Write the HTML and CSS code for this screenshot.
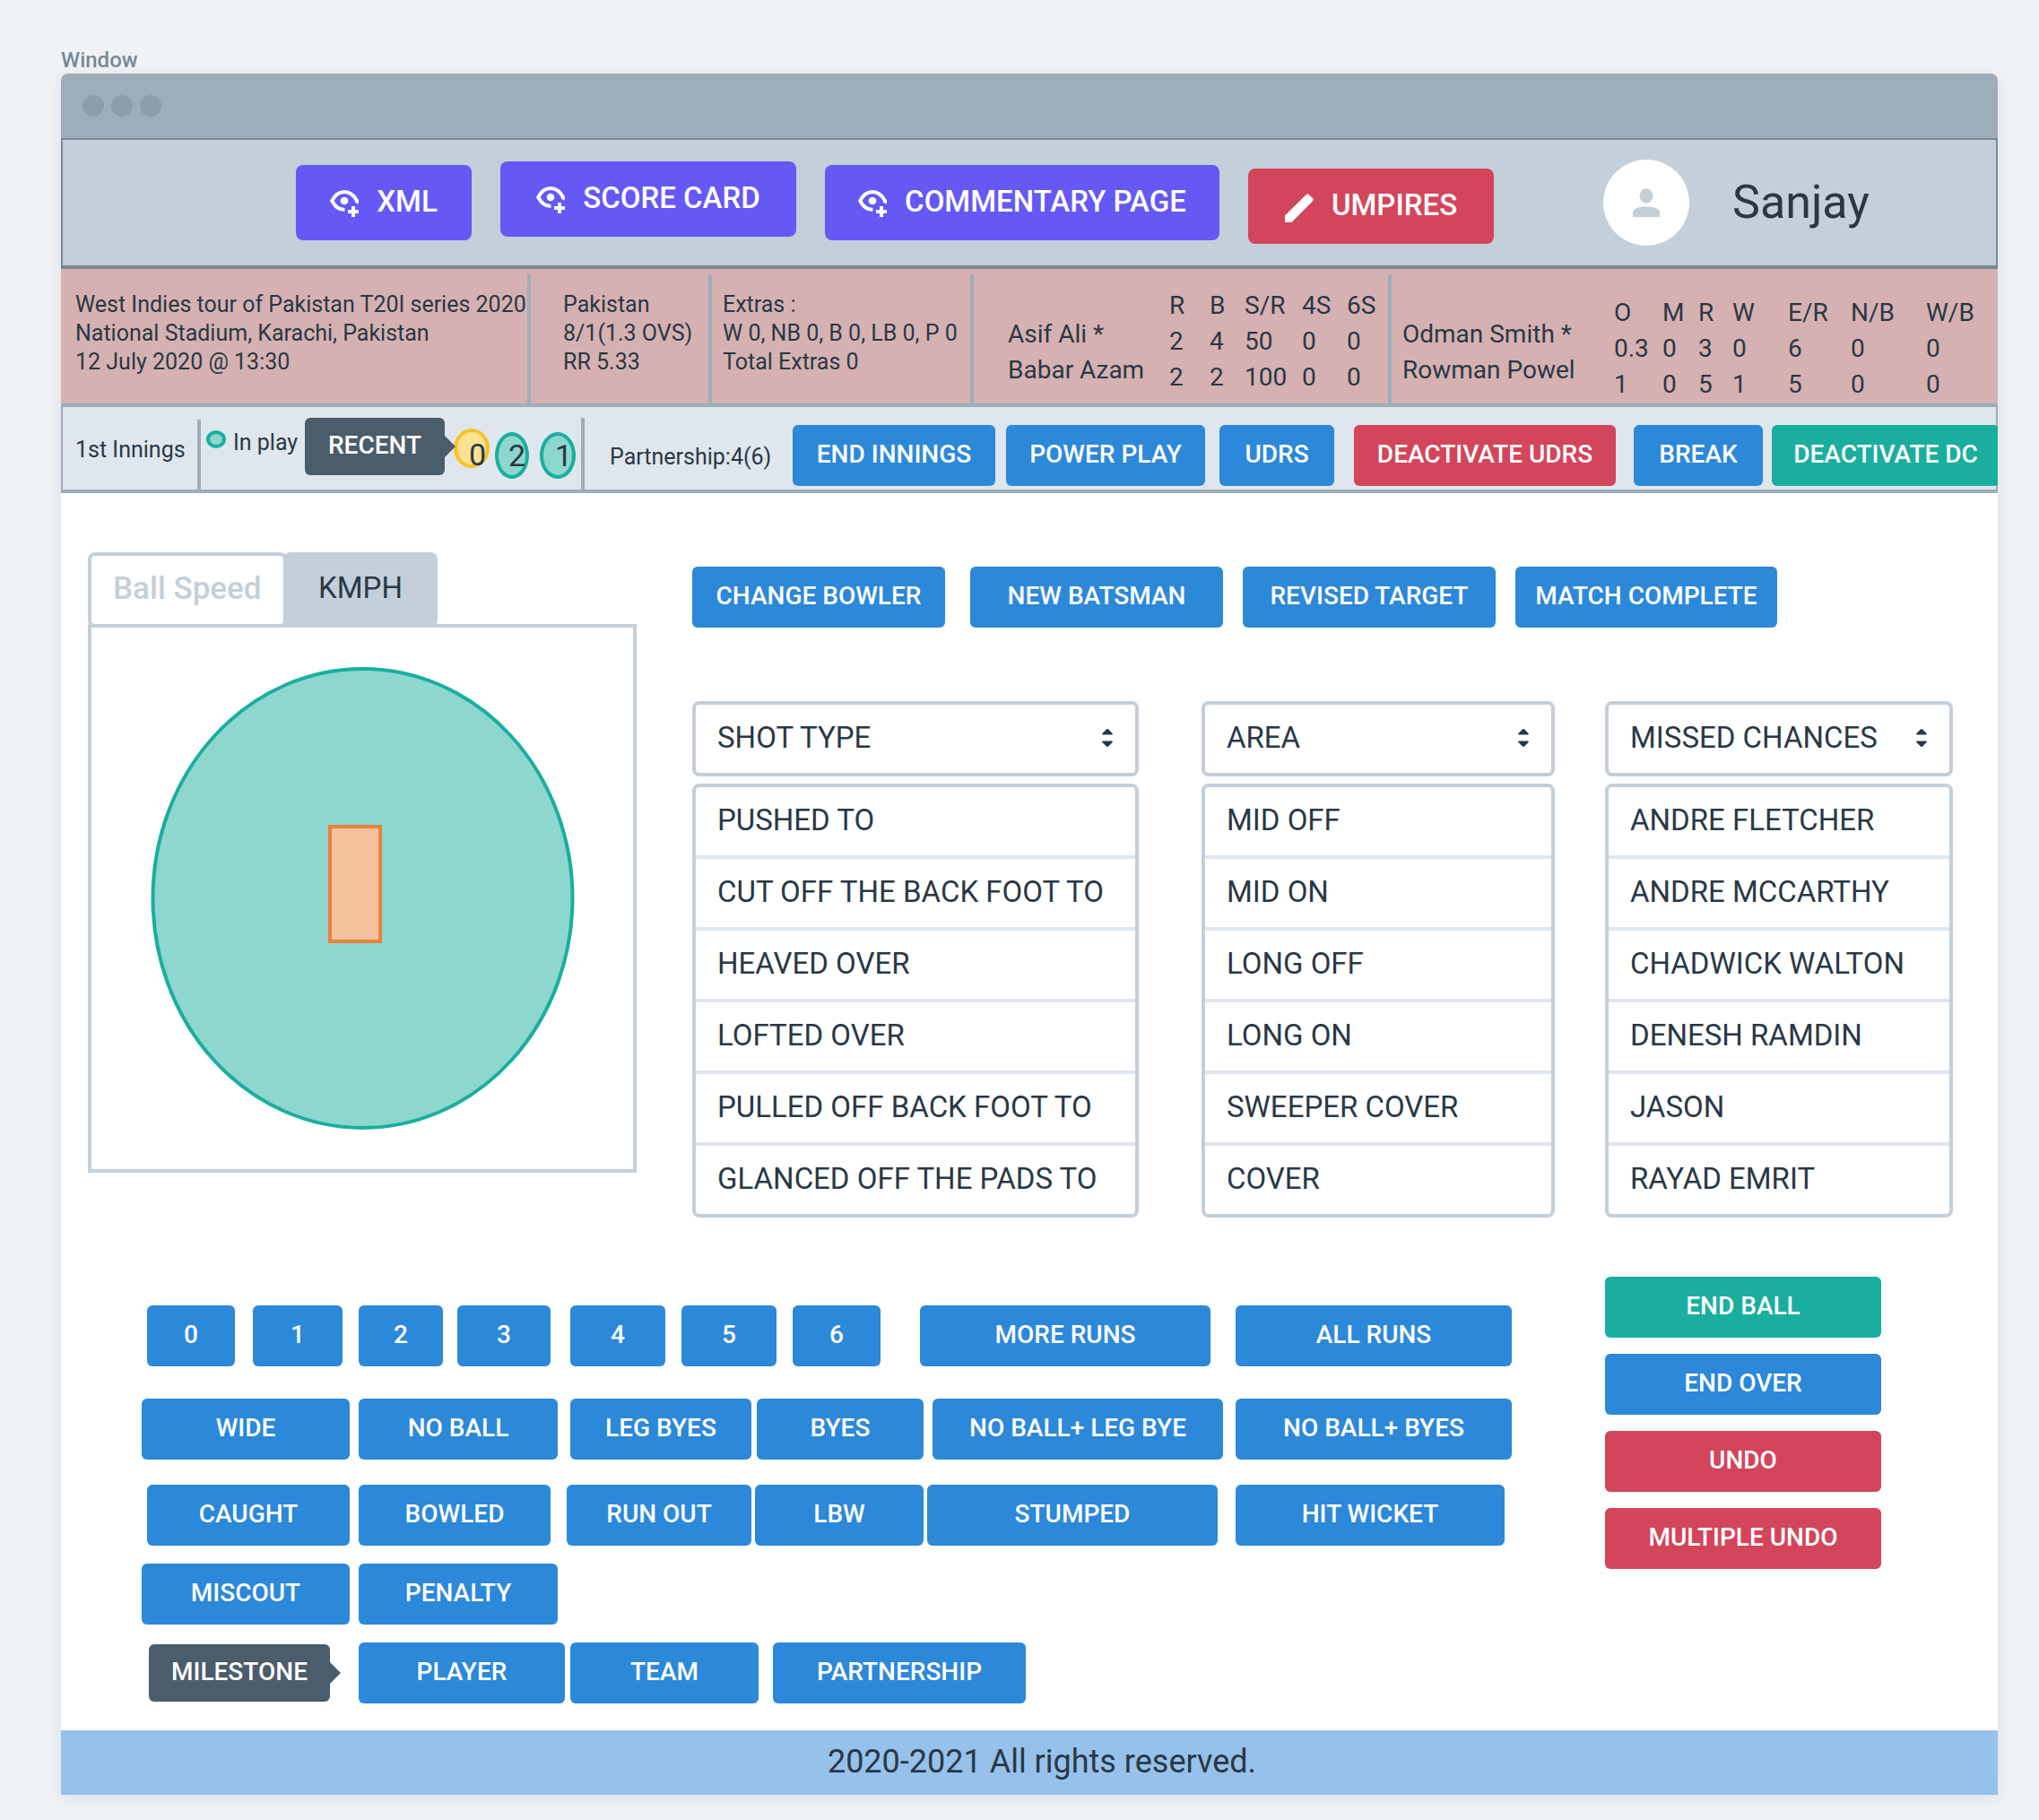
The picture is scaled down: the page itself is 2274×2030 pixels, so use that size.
FILE: index.html
```html
<!DOCTYPE html>
<html lang="en">
<head>
<meta charset="utf-8">
<title>Match scoring</title>
<link rel="stylesheet" href="styles.css">
</head>
<body>
<svg class="sprite" aria-hidden="true">
  <symbol id="eye-plus" viewBox="0 0 32 32">
    <path d="M29.6 14.6C30.3 13.2 30.2 12.4 29.8 11.6C26.6 5.6 21.6 2 16 2C10.4 2 5.4 5.8 2.2 12C5.4 18.2 10.4 22 16.4 22" fill="none" stroke="currentColor" stroke-width="4" stroke-linejoin="round"/>
    <circle cx="16" cy="12" r="4.3" fill="currentColor"/>
    <path d="M26 18v12M20 24h12" fill="none" stroke="currentColor" stroke-width="4"/>
  </symbol>
  <symbol id="pencil" viewBox="0 0 32 32">
    <path d="M0 32V24.500L23.800 0.900Q25.200 -0.400 26.600 0.900L31 5.300Q32.400 6.700 31 8.200L7.500 32Z" fill="currentColor"/>
  </symbol>
  <symbol id="person" viewBox="0 0 32 32">
    <ellipse cx="16" cy="8.500" rx="7.500" ry="8.300" fill="currentColor"/>
    <path d="M1 32V27C1 22.500 8 20.500 16 20.500S31 22.500 31 27V32Z" fill="currentColor"/>
  </symbol>
  <symbol id="sort" viewBox="0 0 12 20">
    <path d="M6 0Q6.800 0 7.600 0.900L11.600 5Q12.300 6.500 11 6.500H1Q-0.300 6.500 0.400 5L4.400 0.900Q5.200 0 6 0ZM6 20Q6.800 20 7.600 19.100L11.600 15Q12.300 13.500 11 13.500H1Q-0.300 13.500 0.400 15L4.400 19.100Q5.200 20 6 20Z" fill="currentColor"/>
  </symbol>
</svg>

<p class="caption">Window</p>
<div class="window">
  <div class="titlebar"><i></i><i></i><i></i></div>

  <header class="header">
    <nav class="nav">
      <button class="btn btn-lg purple mid"><svg><use href="#eye-plus"/></svg>XML</button>
      <button class="btn btn-lg purple"><svg><use href="#eye-plus"/></svg>SCORE CARD</button>
      <button class="btn btn-lg purple mid"><svg><use href="#eye-plus"/></svg>COMMENTARY PAGE</button>
      <button class="btn btn-lg red low"><svg><use href="#pencil"/></svg>UMPIRES</button>
    </nav>
    <div class="user">
      <span class="avatar"><svg><use href="#person"/></svg></span>
      <span class="user-name">Sanjay</span>
    </div>
  </header>

  <section class="summary">
    <div class="cell cell-match">
      <p>West Indies tour of Pakistan T20I series 2020</p>
      <p>National Stadium, Karachi, Pakistan</p>
      <p>12 July 2020 @ 13:30</p>
    </div>
    <div class="cell cell-team">
      <p>Pakistan</p>
      <p>8/1(1.3 OVS)</p>
      <p>RR 5.33</p>
    </div>
    <div class="cell cell-extras">
      <p>Extras :</p>
      <p>W 0, NB 0, B 0, LB 0, P 0</p>
      <p>Total Extras 0</p>
    </div>
    <div class="cell cell-batting">
      <table class="stats batting">
        <colgroup><col class="c-name"><col class="c-r"><col class="c-b"><col class="c-sr"><col class="c-4"><col class="c-6"></colgroup>
        <thead><tr><td></td><th>R</th><th>B</th><th>S/R</th><th>4S</th><th>6S</th></tr></thead>
        <tbody>
          <tr><th scope="row">Asif Ali *</th><td>2</td><td>4</td><td>50</td><td>0</td><td>0</td></tr>
          <tr><th scope="row">Babar Azam</th><td>2</td><td>2</td><td>100</td><td>0</td><td>0</td></tr>
        </tbody>
      </table>
    </div>
    <div class="cell cell-bowling">
      <table class="stats bowling">
        <colgroup><col class="c-name"><col class="c-o"><col class="c-m"><col class="c-r"><col class="c-w"><col class="c-er"><col class="c-nb"><col class="c-wb"></colgroup>
        <thead><tr><td></td><th>O</th><th>M</th><th>R</th><th>W</th><th>E/R</th><th>N/B</th><th>W/B</th></tr></thead>
        <tbody>
          <tr><th scope="row">Odman Smith *</th><td>0.3</td><td>0</td><td>3</td><td>0</td><td>6</td><td>0</td><td>0</td></tr>
          <tr><th scope="row">Rowman Powel</th><td>1</td><td>0</td><td>5</td><td>1</td><td>5</td><td>0</td><td>0</td></tr>
        </tbody>
      </table>
    </div>
  </section>

  <section class="strip">
    <p class="innings">1st Innings</p>
    <div class="recent">
      <p class="status"><i></i>In play</p>
      <span class="tag">RECENT</span>
      <span class="ball ball-dot">0</span>
      <span class="ball">2</span>
      <span class="ball ball-last">1</span>
    </div>
    <p class="partnership">Partnership:4(6)</p>
    <div class="actions">
      <button class="btn w226">END INNINGS</button>
      <button class="btn w222 ml12">POWER PLAY</button>
      <button class="btn w128 ml16">UDRS</button>
      <button class="btn red w292 ml22">DEACTIVATE UDRS</button>
      <button class="btn w144 ml20">BREAK</button>
      <button class="btn green w254 ml10">DEACTIVATE DC</button>
    </div>
  </section>

  <main>
    <div class="upper">
      <section class="field">
        <div class="speed">
          <input class="speed-input" type="text" placeholder="Ball Speed" aria-label="Ball Speed">
          <span class="speed-unit">KMPH</span>
        </div>
        <div class="ground">
          <svg viewBox="0 0 604 604" role="img" aria-label="Ground">
            <ellipse cx="302.500" cy="302" rx="234" ry="256" fill="#8dd7cf" stroke="#1aae9f" stroke-width="4"/>
            <rect x="266" y="222" width="56" height="128" fill="#f4c19d" stroke="#e8833a" stroke-width="4"/>
          </svg>
        </div>
      </section>
      <section class="entry">
        <div class="row">
          <button class="btn w282">CHANGE BOWLER</button>
          <button class="btn w282 ml28">NEW BATSMAN</button>
          <button class="btn w282 ml22">REVISED TARGET</button>
          <button class="btn w292 ml22">MATCH COMPLETE</button>
        </div>
        <div class="pickers">
          <div class="picker">
            <div class="select">
              <select aria-label="Shot type"><option>SHOT TYPE</option></select>
              <svg><use href="#sort"/></svg>
            </div>
            <ul class="options">
              <li>PUSHED TO</li>
              <li>CUT OFF THE BACK FOOT TO</li>
              <li>HEAVED OVER</li>
              <li>LOFTED OVER</li>
              <li>PULLED OFF BACK FOOT TO</li>
              <li>GLANCED OFF THE PADS TO</li>
            </ul>
          </div>
          <div class="picker">
            <div class="select">
              <select aria-label="Area"><option>AREA</option></select>
              <svg><use href="#sort"/></svg>
            </div>
            <ul class="options">
              <li>MID OFF</li>
              <li>MID ON</li>
              <li>LONG OFF</li>
              <li>LONG ON</li>
              <li>SWEEPER COVER</li>
              <li>COVER</li>
            </ul>
          </div>
          <div class="picker">
            <div class="select">
              <select aria-label="Missed chances"><option>MISSED CHANCES</option></select>
              <svg><use href="#sort"/></svg>
            </div>
            <ul class="options">
              <li>ANDRE FLETCHER</li>
              <li>ANDRE MCCARTHY</li>
              <li>CHADWICK WALTON</li>
              <li>DENESH RAMDIN</li>
              <li>JASON</li>
              <li>RAYAD EMRIT</li>
            </ul>
          </div>
        </div>
      </section>
    </div>

    <div class="lower">
      <section class="keypad">
        <div class="row row-runs">
          <button class="btn w98 ml6">0</button>
          <button class="btn w100 ml20">1</button>
          <button class="btn w94 ml18">2</button>
          <button class="btn w104 ml16">3</button>
          <button class="btn w106 ml22">4</button>
          <button class="btn w106 ml18">5</button>
          <button class="btn w98 ml18">6</button>
          <button class="btn w324 ml44">MORE RUNS</button>
          <button class="btn w308 ml28">ALL RUNS</button>
        </div>
        <div class="row row-extras">
          <button class="btn w232">WIDE</button>
          <button class="btn w222 ml10">NO BALL</button>
          <button class="btn w202 ml14">LEG BYES</button>
          <button class="btn w186 ml6">BYES</button>
          <button class="btn w324 ml10">NO BALL+ LEG BYE</button>
          <button class="btn w308 ml14">NO BALL+ BYES</button>
        </div>
        <div class="row row-wickets">
          <button class="btn w226 ml6">CAUGHT</button>
          <button class="btn w214 ml10">BOWLED</button>
          <button class="btn w206 ml18">RUN OUT</button>
          <button class="btn w188 ml4">LBW</button>
          <button class="btn w324 ml4">STUMPED</button>
          <button class="btn w300 ml20">HIT WICKET</button>
        </div>
        <div class="row row-other">
          <button class="btn w232">MISCOUT</button>
          <button class="btn w222 ml10">PENALTY</button>
        </div>
        <div class="row">
          <span class="tag tag-wide">MILESTONE</span>
          <button class="btn w230 ml20">PLAYER</button>
          <button class="btn w210 ml6">TEAM</button>
          <button class="btn w282 ml16">PARTNERSHIP</button>
        </div>
      </section>
      <aside class="side">
        <button class="btn green">END BALL</button>
        <button class="btn">END OVER</button>
        <button class="btn red">UNDO</button>
        <button class="btn red">MULTIPLE UNDO</button>
      </aside>
    </div>
  </main>

  <footer class="footer">2020-2021 All rights reserved.</footer>
</div>
</body>
</html>
```
FILE: styles.css
```css
* { box-sizing: border-box; }

body {
  margin: 0;
  padding: 52px 46px 28px 68px;
  background: #eff3f6;
  color: #293845;
  font: 400 25px/32px Roboto, "Liberation Sans", sans-serif;
}

p, ul { margin: 0; padding: 0; list-style: none; }
.sprite { position: absolute; width: 0; height: 0; }

.caption { color: #788896; font-size: 24px; font-weight: 500; line-height: 30px; }

.window {
  overflow: hidden;
  border-radius: 8px 8px 0 0;
  background: #fff;
  box-shadow: 0 4px 20px rgba(0, 0, 0, .08);
}

.titlebar { display: flex; gap: 8px; padding: 24px; background: #9eadba; }
.titlebar i { width: 24px; height: 24px; border-radius: 50%; background: #8e9dac; }

/* Buttons */
.btn {
  display: flex;
  flex-shrink: 0;
  align-items: center;
  justify-content: center;
  height: 68px;
  padding: 0 0 2px;
  border: 0;
  border-radius: 6px;
  background: #2c88d9;
  color: #fff;
  font: 500 28px/32px Roboto, "Liberation Sans", sans-serif;
  white-space: nowrap;
}
.btn-lg { gap: 20px; height: 84px; border-radius: 8px; font-size: 33px; }
.btn-lg svg { flex: none; width: 32px; height: 32px; margin-top: 6px; }
.purple { background: #6558f5; }
.red { background: #d3455b; }
.green { background: #1aae9f; }

.tag {
  position: relative;
  display: flex;
  flex-shrink: 0;
  align-items: center;
  justify-content: center;
  width: 156px;
  height: 64px;
  margin-right: 10px;
  padding-bottom: 2px;
  border-radius: 6px;
  background: #4b5c6b;
  color: #fff;
  font-size: 28px;
  font-weight: 500;
}
.tag::after {
  content: "";
  position: absolute;
  top: 20px;
  left: 100%;
  border: solid transparent;
  border-width: 12px 0 12px 12px;
  border-left-color: #4b5c6b;
}
.tag-wide { width: 202px; margin: 0 12px 0 8px; }

/* Header */
.header {
  display: flex;
  height: 146px;
  padding: 24px 0 0 260px;
  border: 2px solid #788896;
  border-bottom-width: 4px;
  background: #c3cfd9;
}
.nav {
  display: grid;
  grid-template-columns: 196px 330px 440px 274px;
  gap: 32px;
  align-items: start;
}
.mid { margin-top: 4px; }
.low { margin-top: 8px; }
.user { display: flex; align-items: center; gap: 48px; height: 92px; margin-left: 122px; }
.avatar {
  display: grid;
  place-items: center;
  width: 96px;
  height: 96px;
  border-radius: 50%;
  background: #fff;
  color: #c3cfd9;
}
.avatar svg { width: 32px; height: 32px; }
.user-name { font-size: 52px; line-height: 60px; }

/* Match summary */
.summary {
  display: grid;
  grid-template-columns: 524px 202px 292px 466px 1fr;
  height: 154px;
  padding-top: 6px;
  border-bottom: 4px solid #9eadba;
  background: #d6b1b1;
  white-space: nowrap;
}
.cell { padding-top: 18px; border-right: 4px solid #9eadba; }
.cell-match { padding-left: 16px; }
.cell-team { padding-left: 36px; }
.cell-extras { padding-left: 12px; }
.cell-batting { padding: 11px 0 0 38px; }
.cell-bowling { padding: 15px 0 0 12px; border-right: 0; }

.stats { width: 100%; table-layout: fixed; border-collapse: collapse; font-size: 28px; }
.stats tr { height: 40px; }
.stats th, .stats td { padding: 8px 0 0; font-weight: 400; text-align: left; vertical-align: top; }
.batting { line-height: 32px; }
.bowling { line-height: 24px; }
.bowling th, .bowling td { padding-top: 16px; }
.stats th[scope="row"] { padding-top: 0; }
.batting .c-name { width: 180px; }
.batting .c-r { width: 45px; }
.batting .c-b { width: 39px; }
.batting .c-sr { width: 64px; }
.batting .c-4 { width: 50px; }
.bowling .c-name { width: 236px; }
.bowling .c-o { width: 54px; }
.bowling .c-m { width: 40px; }
.bowling .c-r { width: 38px; }
.bowling .c-w { width: 62px; }
.bowling .c-er { width: 70px; }
.bowling .c-nb { width: 84px; }

/* Innings strip */
.strip {
  display: flex;
  align-items: flex-start;
  height: 96px;
  border: solid #9eadba;
  border-width: 0 2px 4px;
  background: #dfe6ed;
  white-space: nowrap;
}
.strip > * { flex-shrink: 0; }
.innings { width: 154px; height: 78px; margin-top: 14px; padding: 18px 0 0 14px; border-right: 4px solid #9eadba; }
.recent { display: flex; align-items: flex-start; width: 428px; height: 80px; margin-top: 12px; border-right: 4px solid #9eadba; }
.status { display: flex; flex-shrink: 0; gap: 8px; width: 116px; padding: 12px 0 0 6px; }
.status i { width: 22px; height: 20px; margin-top: 2px; border: 4px solid #1aae9f; border-radius: 50%; background: #8dd7cf; }
.ball {
  display: flex;
  flex-shrink: 0;
  align-items: center;
  justify-content: flex-end;
  width: 38px;
  height: 52px;
  margin: 16px 12px 0 6px;
  border: 4px solid #1aae9f;
  border-radius: 50%;
  background: #8dd7cf;
  font-size: 34px;
}
.ball-dot { width: 40px; height: 44px; margin: 12px 0 0; padding-top: 14px; border-color: #f7c325; background: #fbe192; }
.ball-last { width: 40px; margin: 16px 0 0; }
.partnership { width: 232px; padding: 40px 0 0 28px; }
.actions { display: flex; margin-top: 20px; }

/* Field and shot entry */
.upper { display: flex; padding: 66px 50px 0 30px; }
.field { width: 612px; }
.speed { display: flex; margin-bottom: -4px; }
.speed-input, .speed-unit { height: 84px; border: 4px solid #c3cfd9; border-radius: 8px; font-size: 35px; }
.speed-input {
  width: 222px;
  padding: 0 0 4px 24px;
  background: #fff;
  color: #293845;
  font-family: inherit;
  font-weight: 500;
}
.speed-input::placeholder { color: #c3cfd9; opacity: 1; }
.speed-unit {
  display: grid;
  place-items: center;
  width: 172px;
  margin-left: -4px;
  padding-bottom: 4px;
  background: #c3cfd9;
  font-size: 33px;
}
.ground { border: 4px solid #c3cfd9; }
.ground svg { display: block; width: 100%; }

.entry { flex: 1; padding: 16px 0 0 62px; }
.row { display: flex; align-items: center; }
.pickers { display: flex; margin-top: 82px; }
.picker { width: 498px; margin-right: 70px; }
.picker + .picker { width: 394px; margin-right: 56px; }
.picker + .picker + .picker { width: 388px; margin-right: 0; }
.select { position: relative; margin-bottom: 8px; }
.select select {
  display: block;
  width: 100%;
  height: 84px;
  padding: 0 0 2px 24px;
  border: 4px solid #c5cdd8;
  border-radius: 8px;
  background: #fff;
  color: inherit;
  font: 400 33px/40px Roboto, "Liberation Sans", sans-serif;
  appearance: none;
}
.select svg { position: absolute; top: 31px; right: 29px; width: 12px; height: 20px; }
.options { border: 4px solid #c3cfd9; border-radius: 8px; font-size: 33px; line-height: 74px; }
.options li { padding: 0 0 2px 24px; }
.options li + li { border-top: 4px solid #dfe6ed; }

/* Scoring keypad */
.lower { display: flex; justify-content: space-between; padding: 66px 130px 30px 90px; }
.keypad { padding-top: 32px; }
.row-runs { margin-bottom: 36px; }
.row-extras { margin-bottom: 28px; }
.row-wickets, .row-other { margin-bottom: 20px; }
.side { display: grid; gap: 18px; align-content: start; width: 308px; }

.footer {
  padding: 15px 0 17px 28px;
  background: #96c1eb;
  font-size: 36px;
  line-height: 40px;
  text-align: center;
}

/* Widths */
.w94 { width: 94px; }
.w98 { width: 98px; }
.w100 { width: 100px; }
.w104 { width: 104px; }
.w106 { width: 106px; }
.w128 { width: 128px; }
.w144 { width: 144px; }
.w186 { width: 186px; }
.w188 { width: 188px; }
.w202 { width: 202px; }
.w206 { width: 206px; }
.w210 { width: 210px; }
.w214 { width: 214px; }
.w222 { width: 222px; }
.w226 { width: 226px; }
.w230 { width: 230px; }
.w232 { width: 232px; }
.w254 { width: 254px; }
.w282 { width: 282px; }
.w292 { width: 292px; }
.w300 { width: 300px; }
.w308 { width: 308px; }
.w324 { width: 324px; }

/* Spacing */
.ml4 { margin-left: 4px; }
.ml6 { margin-left: 6px; }
.ml10 { margin-left: 10px; }
.ml12 { margin-left: 12px; }
.ml14 { margin-left: 14px; }
.ml16 { margin-left: 16px; }
.ml18 { margin-left: 18px; }
.ml20 { margin-left: 20px; }
.ml22 { margin-left: 22px; }
.ml28 { margin-left: 28px; }
.ml44 { margin-left: 44px; }
```
